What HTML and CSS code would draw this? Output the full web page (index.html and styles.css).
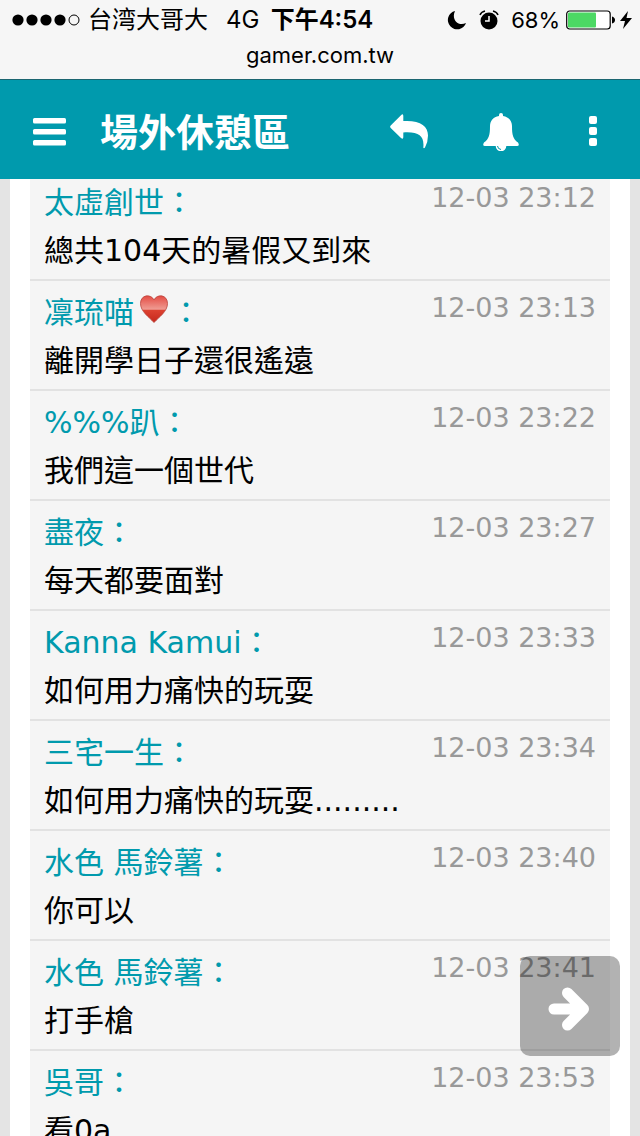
FILE: index.html
```html
<!DOCTYPE html>
<html lang="zh-Hant">
<head>
<meta charset="utf-8">
<meta name="viewport" content="width=device-width, initial-scale=1">
<title>場外休憩區</title>
<link rel="stylesheet" href="styles.css">
</head>
<body>
<div class="screen">
  <div class="top">
    <div class="browser-bar">
      <div class="status">
        <div class="status-left">
          <svg class="signal" width="68" height="12" viewBox="0 0 68 12" aria-hidden="true"><circle cx="6" cy="6" r="5.6"/><circle cx="20" cy="6" r="5.6"/><circle cx="34" cy="6" r="5.6"/><circle cx="48" cy="6" r="5.6"/><circle cx="62" cy="6" r="5" fill="none" stroke="#000"/></svg>
          <span class="carrier" lang="zh-Hans">台湾大哥大</span>
          <span class="network">4G</span>
        </div>
        <span class="clock">下午4:54</span>
        <div class="status-right">
          <svg width="20" height="20" viewBox="0 0 20 20" aria-hidden="true"><path d="M8 1A9.300 9.300 0 1 0 19 13C11 17 4 9 8 1Z"/></svg>
          <svg class="alarm" width="20" height="20" viewBox="0 0 20 20" aria-hidden="true"><circle cx="10" cy="11" r="8.500"/><path d="M1 5Q2 2 6 1M19 5Q18 2 14 1" fill="none" stroke="#000" stroke-width="1.500"/><path d="M10 6v5H6" fill="none" stroke="#fff" stroke-width="1.500"/></svg>
          <span class="percent">68%</span>
          <svg class="battery" width="50" height="20" viewBox="0 0 50 20" aria-hidden="true"><rect x=".7" y="1" width="43.500" height="18" rx="3" fill="#fff" stroke="#000" stroke-width="1.200"/><rect x="2" y="2.500" width="28" height="15" rx="1" fill="#4cd964"/><path d="M46 6.500q3 1 3 3.500t-3 3.500z"/></svg>
          <svg width="12" height="20" viewBox="0 0 12 20" aria-hidden="true"><path d="M8 1 0 11h5L3 19 12 8H6.500Z"/></svg>
        </div>
      </div>
      <div class="address">gamer.com.tw</div>
    </div>
    <header class="board-bar">
      <button class="icon-button" aria-label="選單"><svg width="34" height="28" viewBox="0 0 34 28"><rect x="1" width="33" height="5.500" rx="1.500"/><rect x="1" y="11" width="33" height="5.500" rx="1.500"/><rect x="1" y="22" width="33" height="5.500" rx="1.500"/></svg></button>
      <h1 class="board-title">場外休憩區</h1>
      <nav class="actions">
        <button class="icon-button" aria-label="返回"><svg width="40" height="36" viewBox="0 0 40 36"><path d="M1.700 11.500 12 1.200Q14.300-.8 14.300 2V7C31 6 39 12 39 21.500Q39 28 36 33.500 34.800 35 34.300 33.500C35.500 22 30 17.500 14.300 18.500V23Q14.300 26 12 24L1.700 14Q.5 12.800 1.700 11.500Z"/></svg></button>
        <button class="icon-button" aria-label="通知"><svg width="36" height="38" viewBox="0 0 36 38"><path d="M16 3V2a2 2 0 0 1 4 0V3C26 4 29 8 29 13 29 22 30 26 35 29.500Q37 33 34 33H23.300a5.300 5.300 0 0 1-10.600 0H2Q-1 33 1 29.500C6 26 7 22 7 13 7 8 10 4 16 3Z"/><path d="M14.500 33a4 4 0 0 0 3.500 3.500" fill="none" stroke="#009aad"/></svg></button>
        <button class="icon-button" aria-label="更多"><svg width="8" height="32" viewBox="0 0 8 32"><rect width="8" height="8" rx="2"/><rect y="11" width="8" height="8" rx="2"/><rect y="22" width="8" height="8" rx="2"/></svg></button>
      </nav>
    </header>
  </div>
  <main class="page">
    <ul class="comments">
      <li class="comment"><div class="meta"><a class="name" href="#">太虛創世：</a><time class="time">12-03 23:12</time></div><p class="text">總共104天的暑假又到來</p></li>
      <li class="comment"><div class="meta"><a class="name" href="#">凜琉喵<svg class="heart" width="30" height="28" viewBox="0 0 30 28" role="img" aria-label="愛心"><defs><linearGradient id="heart-fill" x2="0" y2="1"><stop offset="0" stop-color="#e44b43"/><stop offset=".5" stop-color="#ef9b92"/><stop offset=".55" stop-color="#dc4130"/><stop offset="1" stop-color="#c5281c"/></linearGradient></defs><path d="M15 27.500C10 22 1.500 16.500 1.500 8.500 1.500-.5 12-1.500 15 5 18-1.500 28.500-.5 28.500 8.500 28.500 16.500 20 22 15 27.500Z" fill="url(#heart-fill)" stroke="#b9443c" stroke-width=".8"/></svg>：</a><time class="time">12-03 23:13</time></div><p class="text">離開學日子還很遙遠</p></li>
      <li class="comment"><div class="meta"><a class="name" href="#">%%%趴：</a><time class="time">12-03 23:22</time></div><p class="text">我們這一個世代</p></li>
      <li class="comment"><div class="meta"><a class="name" href="#">盡夜：</a><time class="time">12-03 23:27</time></div><p class="text">每天都要面對</p></li>
      <li class="comment"><div class="meta"><a class="name" href="#">Kanna Kamui：</a><time class="time">12-03 23:33</time></div><p class="text">如何用力痛快的玩耍</p></li>
      <li class="comment"><div class="meta"><a class="name" href="#">三宅一生：</a><time class="time">12-03 23:34</time></div><p class="text">如何用力痛快的玩耍.........</p></li>
      <li class="comment"><div class="meta"><a class="name" href="#">水色 馬鈴薯：</a><time class="time">12-03 23:40</time></div><p class="text">你可以</p></li>
      <li class="comment"><div class="meta"><a class="name" href="#">水色 馬鈴薯：</a><time class="time">12-03 23:41</time></div><p class="text">打手槍</p></li>
      <li class="comment"><div class="meta"><a class="name" href="#">吳哥：</a><time class="time">12-03 23:53</time></div><p class="text">看0a</p></li>
    </ul>
  </main>
  <button class="next" aria-label="下一頁"><svg width="42" height="44" viewBox="0 0 42 44"><path d="M6 22H34M19.500 6 35.500 22 19.500 38" fill="none" stroke="#fff" stroke-width="11" stroke-linecap="round" stroke-linejoin="round"/></svg></button>
</div>
</body>
</html>
```
FILE: styles.css
```css
* {
  box-sizing: border-box;
}

body {
  margin: 0;
  background: #e4e4e4;
  color: #000;
  font-family: "DejaVu Sans", "Noto Sans CJK TC", sans-serif;
}

.screen {
  height: 100vh;
  overflow: hidden;
}

.top {
  position: relative;
  z-index: 1;
}

.browser-bar {
  height: 79px;
  background: #f6f6f6;
  font-family: Inter, "Noto Sans CJK SC", sans-serif;
  font-size: 24px;
}

.status {
  display: grid;
  grid-template-columns: 1fr auto 1fr;
  align-items: center;
  height: 40px;
  padding: 0 8px 0 12px;
  line-height: 40px;
}

.status-left,
.status-right {
  display: flex;
  align-items: center;
}

.status-right {
  justify-content: flex-end;
}

.carrier {
  margin-left: 8px;
}

.network {
  margin-left: 18px;
}

.clock {
  font-weight: 600;
}

.percent {
  font-size: 22px;
}

.alarm {
  margin: 0 12px;
}

.battery {
  margin: 0 4px 0 6px;
}

.address {
  font-size: 22px;
  line-height: 30px;
  text-align: center;
}

.board-bar {
  display: flex;
  align-items: center;
  height: 100px;
  padding: 4px 43px 0 32px;
  border-top: 1px solid #1b6570;
  background: #009aad;
}

.icon-button {
  display: flex;
  padding: 0;
  border: 0;
  background: none;
}

.icon-button svg {
  fill: #fff;
}

.board-title {
  flex: 1;
  margin: 0 0 4px 34px;
  color: #fff;
  font-size: 38px;
  font-weight: 700;
  line-height: 56px;
  font-family: "Noto Sans CJK TC", sans-serif;
}

.actions {
  display: flex;
  align-items: center;
  gap: 54px;
}

.actions .icon-button:last-child {
  margin-left: 16px;
}

.page {
  margin: -8px 10px 0;
  padding: 0 20px;
  background: #fff;
}

.comments {
  margin: 0;
  padding: 0;
  list-style: none;
}

.comment {
  padding: 8px 14px 4px;
  border-bottom: 2px solid #e2e2e2;
  background: #f5f5f5;
}

.meta {
  display: flex;
  justify-content: space-between;
  height: 48px;
}

.name {
  color: #009aad;
  font-size: 30px;
  line-height: 48px;
  text-decoration: none;
}

.heart {
  margin: 0 2px 0 5px;
}

.time {
  color: #999;
  font-size: 27px;
  line-height: 38px;
}

.text {
  margin: 0;
  font-size: 30px;
  line-height: 48px;
}

.next {
  position: fixed;
  right: 20px;
  bottom: 80px;
  display: flex;
  align-items: center;
  justify-content: center;
  width: 100px;
  height: 100px;
  padding: 6px 2px 0 0;
  border: 0;
  border-radius: 10px;
  background: rgba(0, 0, 0, 0.3);
}
```
